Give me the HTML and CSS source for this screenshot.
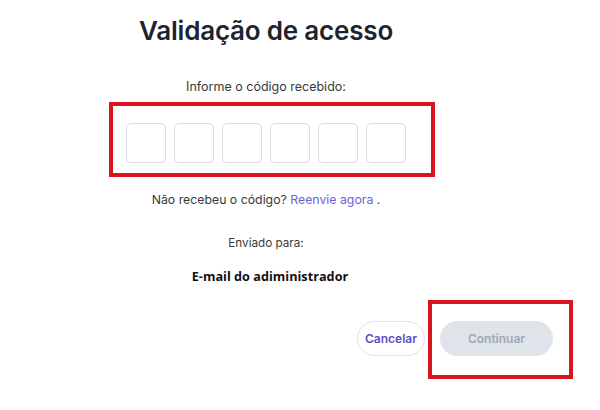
FILE: index.html
```html
<!DOCTYPE html>
<html lang="pt-BR">
<head>
    <meta charset="UTF-8">
    <meta name="viewport" content="width=device-width, initial-scale=1.0">
    <title>Validação de acesso</title>
    <link rel="stylesheet" href="styles.css">
</head>
<body>
    <section class="validation">
        <h1>Validação de acesso</h1>
        <p class="prompt">Informe o código recebido:</p>

        <div class="code-inputs">
            <input type="text" maxlength="1">
            <input type="text" maxlength="1">
            <input type="text" maxlength="1">
            <input type="text" maxlength="1">
            <input type="text" maxlength="1">
            <input type="text" maxlength="1">
            <span class="highlight highlight-codes"></span>
        </div>

        <p class="resend">Não recebeu o código? <a href="#">Reenvie agora</a> .</p>

        <p class="sent-to">Enviado para:</p>
        <p class="recipient">E-mail do adiministrador</p>
    </section>

    <div class="actions">
        <button type="button" class="btn btn-cancel">Cancelar</button>
        <div class="continue-wrap">
            <button type="button" class="btn btn-continue" disabled>Continuar</button>
            <span class="highlight highlight-continue"></span>
        </div>
    </div>
</body>
</html>
```

FILE: styles.css
```css
* {
    margin: 0;
    padding: 0;
    box-sizing: border-box;
}

body {
    font-family: 'Inter', 'Noto Sans', sans-serif;
    color: #333;
    background: #fff;
    width: 600px;
    height: 410px;
    overflow: hidden;
}

.validation {
    width: 532px;
    display: flex;
    flex-direction: column;
    align-items: center;
    padding-top: 15px;
}

.validation h1 {
    font-size: 26px;
    line-height: 32px;
    font-weight: 600;
    color: #1d2330;
    letter-spacing: -0.2px;
}

.prompt {
    margin-top: 31px;
    font-size: 12.5px;
    line-height: 18px;
    color: #3a3a3a;
}

.code-inputs {
    position: relative;
    display: flex;
    gap: 8px;
    margin-top: 27px;
}

.code-inputs input {
    width: 40px;
    height: 40px;
    border: 1px solid #dcdde0;
    border-radius: 5px;
    background: #fff;
    font-size: 18px;
    text-align: center;
    outline: none;
}

.highlight {
    position: absolute;
    border: 4px solid #d9141e;
    pointer-events: none;
}

.highlight-codes {
    top: -21px;
    left: -17px;
    right: -29px;
    bottom: -14px;
}

.resend {
    margin-top: 28px;
    font-size: 12.3px;
    line-height: 18px;
    color: #3a3a3a;
}

.resend a {
    color: #6c63d8;
    text-decoration: none;
}

.sent-to {
    margin-top: 26px;
    font-size: 11.7px;
    line-height: 16px;
    color: #3a3a3a;
}

.recipient {
    margin-top: 16px;
    padding-left: 8px;
    font-family: 'Open Sans', 'Noto Sans', sans-serif;
    font-size: 12.7px;
    line-height: 18px;
    font-weight: 700;
    color: #111;
}

.actions {
    display: flex;
    justify-content: flex-end;
    align-items: center;
    gap: 15px;
    padding-right: 47px;
    margin-top: 36px;
}

.continue-wrap {
    position: relative;
}

.btn {
    font-family: 'Inter', 'Noto Sans', sans-serif;
    font-size: 12px;
    font-weight: 600;
    height: 35px;
    border-radius: 18px;
    cursor: pointer;
}

.btn-cancel {
    width: 68px;
    background: #fff;
    border: 1px solid #e2e3e8;
    color: #5b4fc4;
}

.btn-continue {
    display: block;
    width: 113px;
    background: #dfe3ea;
    border: none;
    color: #a0a8b5;
    cursor: not-allowed;
}

.highlight-continue {
    top: -21px;
    left: -12px;
    right: -20px;
    bottom: -23px;
}
```
